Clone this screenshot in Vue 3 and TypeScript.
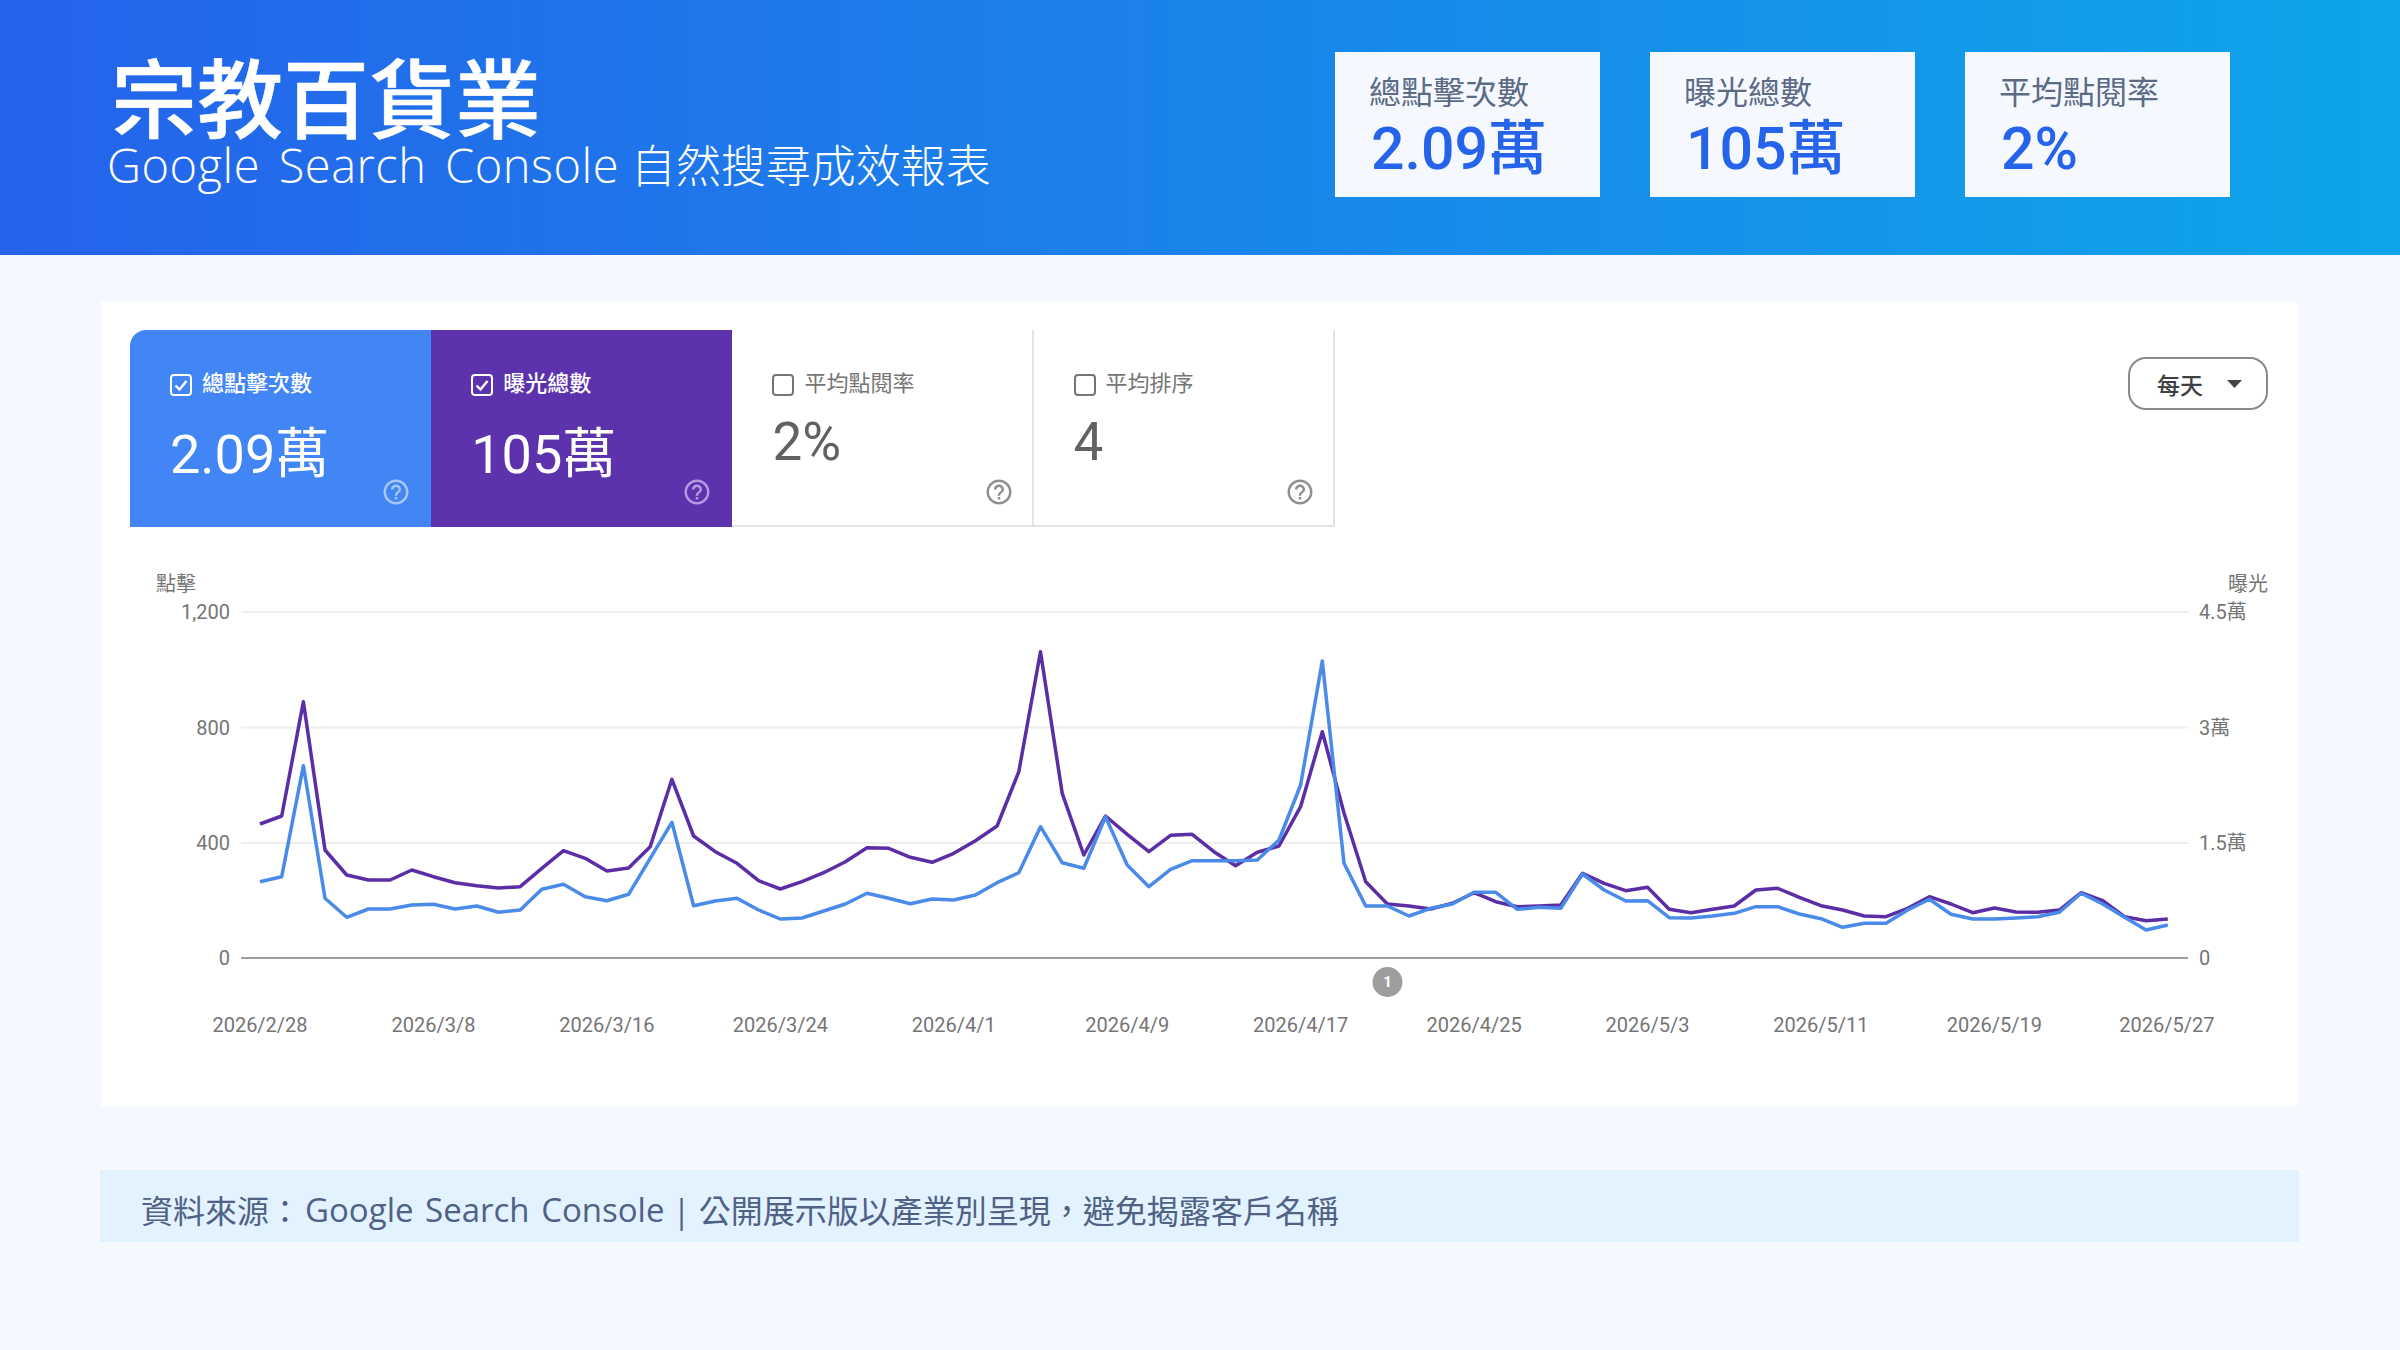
<script setup lang="ts">
const stats = [
  { label: "總點擊次數", value: "2.09萬" },
  { label: "曝光總數", value: "105萬" },
  { label: "平均點閱率", value: "2%" },
];

const tabs = [
  { label: "總點擊次數", value: "2.09萬", on: "blue" },
  { label: "曝光總數", value: "105萬", on: "purple" },
  { label: "平均點閱率", value: "2%", on: "" },
  { label: "平均排序", value: "4", on: "" },
];

const helpPath =
  "M11 18h2v-2h-2v2zm1-16C6.48 2 2 6.48 2 12s4.48 10 10 10 10-4.48 10-10S17.52 2 12 2zm0 18c-4.41 0-8-3.59-8-8s3.59-8 8-8 8 3.59 8 8-3.59 8-8 8zm0-14c-2.21 0-4 1.79-4 4h2c0-1.1.9-2 2-2s2 .9 2 2c0 2-3 1.75-3 5h2c0-2.25 3-2.5 3-5 0-2.21-1.79-4-4-4z";

// daily rows of the chart, read in page pixels
const impressions = [
  824, 816, 701.7, 850, 875, 880, 880, 870, 876.7, 882.7, 885.7, 888, 886.7, 868.3, 850.7, 858.3, 871, 868, 846.7,
  779.3, 836, 851.7, 863.3, 880.7, 889, 881.7, 872.7, 861.7, 847.7, 848.3, 857.3, 862.3, 853.3, 840.7, 826, 771.7,
  651.7, 793.3, 855, 816, 834.3, 851.7, 835.3, 834.3, 851.7, 865.7, 852.3, 846, 806.7, 731.7, 813, 881.7, 904, 906,
  909, 903.3, 892.7, 901.7, 906.7, 906, 905, 873.3, 883.3, 890.7, 887.3, 909.3, 912.7, 909.3, 906, 890, 888.3, 897.3,
  905.7, 910, 916, 916.7, 908.3, 896.7, 904, 912.7, 908, 912, 912.3, 910, 892.7, 900.7, 916.7, 920.7, 919,
];
const clicks = [
  881.7, 876.7, 765.7, 898.3, 917.3, 909, 909, 905, 904.3, 909, 906, 912.3, 910, 889.3, 884.3, 896.7, 900.7, 894.3,
  858.3, 822.3, 905.7, 901, 898.3, 910, 919, 918, 911, 904, 893.3, 898.3, 903.7, 899, 900, 895, 882.7, 872.7, 826.7,
  862.7, 868.3, 816.7, 865, 886.7, 869.3, 860.7, 860.7, 860.7, 860, 840, 785, 661, 863.3, 906, 906, 916, 908.3, 904,
  892.3, 892.3, 909.3, 907.3, 908.3, 874, 890, 901, 900.7, 917.7, 918, 916, 913.3, 906.7, 906.7, 914, 918.7, 927.3,
  923.3, 923.3, 910, 899.3, 914.3, 919, 919, 918, 916.7, 912.3, 893.3, 904, 917.3, 930, 925,
];

const startX = 260;
const stepX = 21.68;
const toPoints = (rows: number[]) =>
  rows.map((y, i) => `${(startX + stepX * i).toFixed(1)},${y}`).join(" ");

const grid = [
  { y: 612, left: "1,200", right: "4.5萬" },
  { y: 727.5, left: "800", right: "3萬" },
  { y: 843, left: "400", right: "1.5萬" },
  { y: 958, left: "0", right: "0" },
];

const dates = [
  "2026/2/28", "2026/3/8", "2026/3/16", "2026/3/24", "2026/4/1", "2026/4/9", "2026/4/17",
  "2026/4/25", "2026/5/3", "2026/5/11", "2026/5/19", "2026/5/27",
];
</script>

<template>
  <div class="page" lang="zh-TW">
    <header class="hero">
      <div class="hero-text">
        <h1>宗教百貨業</h1>
        <p><span class="latin">Google Search Console</span> 自然搜尋成效報表</p>
      </div>
      <div class="stats">
        <div v-for="s in stats" :key="s.label" class="stat">
          <div class="stat-label">{{ s.label }}</div>
          <div class="stat-value">{{ s.value }}</div>
        </div>
      </div>
    </header>

    <section class="panel">
      <div class="panel-top">
        <div class="tabs">
          <div v-for="t in tabs" :key="t.label" class="tab" :class="t.on">
            <div class="tab-head">
              <svg class="check" width="22" height="22" viewBox="0 0 22 22">
                <rect x="1" y="1" width="20" height="20" rx="3" fill="none" stroke="currentColor" stroke-width="2" />
                <path v-if="t.on" d="M5.5 11.5l4 4 7-8.5" fill="none" stroke="currentColor" stroke-width="2.4" />
              </svg>
              <span>{{ t.label }}</span>
            </div>
            <div class="tab-value">{{ t.value }}</div>
            <svg class="help" width="30" height="30" viewBox="0 0 24 24">
              <path :d="helpPath" fill="currentColor" />
            </svg>
          </div>
        </div>
        <div class="range">
          <span>每天</span>
          <svg width="15" height="8" viewBox="0 0 15 8"><path d="M0 0h15L7.5 8z" fill="#444" /></svg>
        </div>
      </div>

      <svg class="chart" viewBox="101 527 2197 579" width="2197" height="579">
        <text class="axis-title" x="156" y="591">點擊</text>
        <text class="axis-title" x="2268" y="591" text-anchor="end">曝光</text>
        <g v-for="g in grid" :key="g.y">
          <line x1="241" x2="2188" :y1="g.y" :y2="g.y" :stroke="g.y === 958 ? '#9e9e9e' : '#eeeeee'" stroke-width="2" />
          <text class="axis" x="230" :y="g.y + 7" text-anchor="end">{{ g.left }}</text>
          <text class="axis" x="2199" :y="g.y + 7">{{ g.right }}</text>
        </g>
        <polyline :points="toPoints(impressions)" fill="none" stroke="#5b2ea6" stroke-width="3.5" stroke-linejoin="round" />
        <polyline :points="toPoints(clicks)" fill="none" stroke="#4a8ae8" stroke-width="3.5" stroke-linejoin="round" />
        <text
          v-for="(d, i) in dates"
          :key="d"
          class="axis"
          :x="startX + stepX * 8 * i + (i === 11 ? -1 : 0)"
          y="1032"
          text-anchor="middle"
        >{{ d }}</text>
        <circle cx="1387.5" cy="982" r="15" fill="#9e9e9e" />
        <text class="marker" x="1387.5" y="987" text-anchor="middle">1</text>
      </svg>
    </section>

    <footer class="note">資料來源：<span class="note-latin">Google Search Console</span> | 公開展示版以產業別呈現，避免揭露客戶名稱</footer>
  </div>
</template>

<style>
html,
body {
  margin: 0;
  background: #f5f9ff;
}
</style>

<style scoped>
.page {
  width: 2400px;
  height: 1350px;
  display: flex;
  flex-direction: column;
  background: #f5f9ff;
  font-family: "Open Sans", "Noto Sans CJK TC", sans-serif;
  overflow: hidden;
}

.hero {
  height: 255px;
  box-sizing: border-box;
  padding: 0 170px 6px 107px;
  display: flex;
  align-items: center;
  justify-content: space-between;
  background: linear-gradient(90deg, #2563eb, #0ea5e9);
  color: #fff;
}

.hero-text {
  margin-bottom: 10px;
}

.hero h1 {
  margin: 0 0 4px 4px;
  font-family: "Noto Sans CJK TC", sans-serif;
  font-size: 86px;
  line-height: 88px;
  font-weight: 500;
  -webkit-text-stroke: 0.6px #fff;
}

.hero p {
  margin: 0;
  font-size: 45px;
  line-height: 44px;
  font-weight: 300;
}

.latin {
  font-size: 47px;
  word-spacing: 6px;
  letter-spacing: 0.5px;
}

.stats {
  display: flex;
  gap: 50px;
}

.stat {
  width: 265px;
  height: 145px;
  box-sizing: border-box;
  padding: 22px 0 0 34px;
  background: #f5f9ff;
}

.stat-label {
  font-size: 32px;
  line-height: 36px;
  color: #5b6b85;
}

.stat-value {
  margin: 6px 0 0 2px;
  font-family: Roboto, "Noto Sans CJK TC", sans-serif;
  font-size: 59px;
  line-height: 66px;
  font-weight: 500;
  color: #2563eb;
}

.panel {
  width: 2197px;
  height: 804px;
  margin: 47px 0 0 101px;
  box-sizing: border-box;
  padding-top: 28px;
  background: #fff;
}

.panel-top {
  display: flex;
  justify-content: space-between;
  align-items: flex-start;
  padding: 0 30px 0 29px;
}

.tabs {
  display: flex;
}

.tab {
  position: relative;
  width: 301.2px;
  height: 197px;
  box-sizing: border-box;
  padding: 44px 0 0 40px;
  border-right: 2px solid #e4e4e4;
  border-bottom: 2px solid #e4e4e4;
  color: #757575;
  font-family: Roboto, "Noto Sans CJK TC", sans-serif;
}

.tab.blue,
.tab.purple {
  border: 0;
  color: #fff;
}

.tab.blue {
  background: #4285f4;
  border-top-left-radius: 16px;
}

.tab.purple {
  background: #5c33ad;
}

.tab-head {
  display: flex;
  align-items: center;
  gap: 10px;
  height: 22px;
  font-size: 22px;
}

.tab-head span {
  margin-bottom: 8px;
}

.tab.blue .tab-head span,
.tab.purple .tab-head span {
  font-weight: 500;
}

.tab-value {
  margin-top: 16px;
  font-size: 53px;
  line-height: 60px;
  color: #616161;
}

.tab.blue .tab-value,
.tab.purple .tab-value {
  margin-top: 29px;
  font-size: 54px;
  color: #fff;
}

.help {
  position: absolute;
  right: 18px;
  bottom: 18px;
  color: #8f8f8f;
}

.tab.blue .help {
  right: 20px;
  bottom: 20px;
  color: #a9c8fa;
}

.tab.purple .help {
  right: 20px;
  bottom: 20px;
  color: #b79ae6;
}

.range {
  margin-top: 27px;
  width: 140px;
  height: 53px;
  box-sizing: border-box;
  padding: 0 24px 0 27px;
  display: flex;
  align-items: center;
  justify-content: space-between;
  border: 2px solid #8a8a8a;
  border-radius: 18px;
  font-family: "Noto Sans CJK TC", sans-serif;
  font-size: 23px;
  font-weight: 500;
  color: #3c4043;
}

.chart {
  display: block;
}

.axis,
.axis-title {
  font-family: Roboto, "Noto Sans CJK TC", sans-serif;
  font-size: 20px;
  fill: #757575;
}

.marker {
  font-family: Roboto, sans-serif;
  font-size: 15px;
  font-weight: 700;
  fill: #fff;
}

.note {
  width: 2199px;
  height: 72px;
  margin: 64px 0 0 100px;
  box-sizing: border-box;
  padding: 6px 0 0 41px;
  display: flex;
  align-items: center;
  background: #e3f2ff;
  font-size: 32px;
  color: #4f6285;
  white-space: pre;
}

.note-latin {
  margin-left: 4px;
  font-size: 33px;
  word-spacing: 3px;
}
</style>
